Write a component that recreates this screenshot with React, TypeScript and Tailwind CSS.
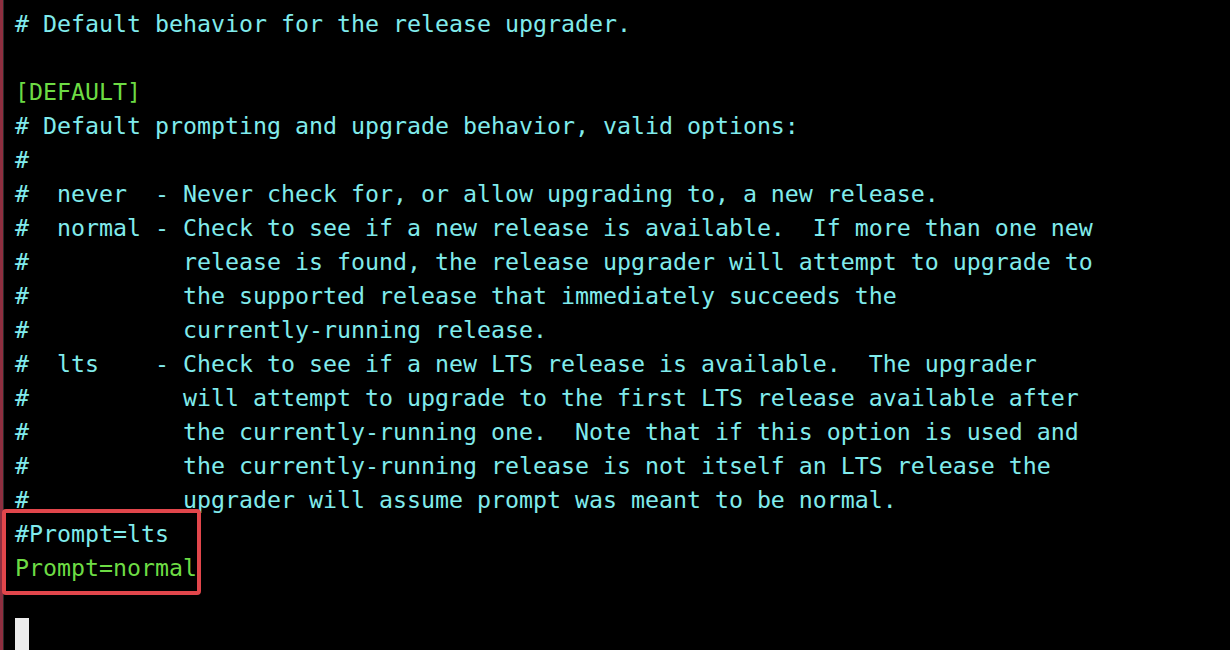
import React from "react";

type Line = { text: string; tone?: "cyan" | "green" };

const lines: Line[] = [
  { text: "# Default behavior for the release upgrader." },
  { text: "" },
  { text: "[DEFAULT]", tone: "green" },
  { text: "# Default prompting and upgrade behavior, valid options:" },
  { text: "#" },
  { text: "#  never  - Never check for, or allow upgrading to, a new release." },
  { text: "#  normal - Check to see if a new release is available.  If more than one new" },
  { text: "#           release is found, the release upgrader will attempt to upgrade to" },
  { text: "#           the supported release that immediately succeeds the" },
  { text: "#           currently-running release." },
  { text: "#  lts    - Check to see if a new LTS release is available.  The upgrader" },
  { text: "#           will attempt to upgrade to the first LTS release available after" },
  { text: "#           the currently-running one.  Note that if this option is used and" },
  { text: "#           the currently-running release is not itself an LTS release the" },
  { text: "#           upgrader will assume prompt was meant to be normal." },
  { text: "#Prompt=lts" },
  { text: "Prompt=normal", tone: "green" },
  { text: "" },
];

export default function App() {
  return (
    <div className="flex h-[650px] w-[1230px] overflow-hidden bg-black">
      {/* window edge */}
      <div className="w-[3px] shrink-0 bg-[#8e2f40]" />
      <div className="w-[1px] shrink-0 bg-[#2a2a2a]" />
      <div className="relative flex flex-1 flex-col">
        <div className="h-[2px] w-full bg-[#5c5c5c]" />
        <div
          className="flex flex-col pl-[11px] pt-[7px] text-[23.25px] text-[#80ebec]"
          style={{ fontFamily: '"DejaVu Sans Mono", "Liberation Mono", monospace' }}
        >
          {lines.map((l, i) => (
            <div
              key={i}
              className={`h-[34px] whitespace-pre leading-[34px] ${
                l.tone === "green" ? "text-[#6ddc44]" : ""
              }`}
            >
              {l.text}
            </div>
          ))}
          <div className="mt-[-1px] h-[34px] w-[14px] bg-[#ececec]" />
        </div>
        {/* highlight box */}
        <div className="absolute left-[-2px] top-[509px] h-[86px] w-[199px] rounded-[4px] border-[4px] border-[#e1464b]" />
      </div>
    </div>
  );
}
